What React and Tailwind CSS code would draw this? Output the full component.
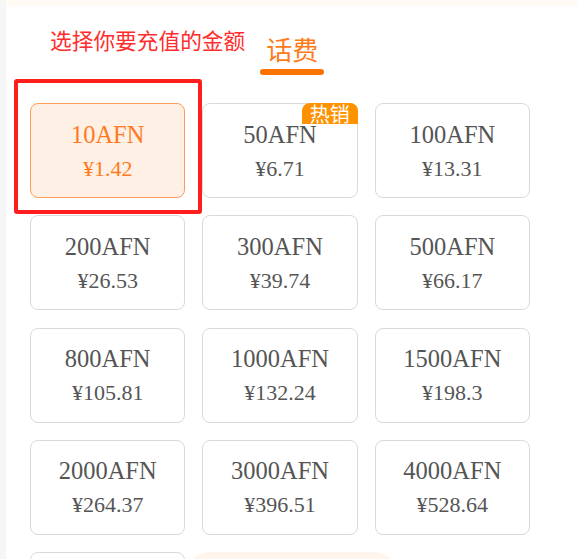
import { useState } from 'react';

const options = [
  { amount: '10AFN', price: '¥1.42' },
  { amount: '50AFN', price: '¥6.71', hot: true },
  { amount: '100AFN', price: '¥13.31' },
  { amount: '200AFN', price: '¥26.53' },
  { amount: '300AFN', price: '¥39.74' },
  { amount: '500AFN', price: '¥66.17' },
  { amount: '800AFN', price: '¥105.81' },
  { amount: '1000AFN', price: '¥132.24' },
  { amount: '1500AFN', price: '¥198.3' },
  { amount: '2000AFN', price: '¥264.37' },
  { amount: '3000AFN', price: '¥396.51' },
  { amount: '4000AFN', price: '¥528.64' },
];

export default function App() {
  const [selected, setSelected] = useState(0);

  return (
    <div className="relative h-[559px] overflow-hidden bg-[#f6f6f6] font-['Noto_Sans_CJK_SC',sans-serif]">
      <div className="ml-[6px] h-full bg-white">
        {/* top tint strip */}
        <div className="h-[6px] bg-[#fffaf4]" />

        {/* Header */}
        <div className="flex items-start pl-[44px] pt-[20px]">
          <span className="text-[21.7px] leading-[28px] text-[#ff2d2d]">选择你要充值的金额</span>
          <div className="ml-[15px] flex flex-col items-center pt-[6px]">
            <span className="px-[6px] text-[26px] leading-[34px] text-[#ff7a1a]">话费</span>
            <div className="mt-[3px] h-[6px] w-[64px] rounded-full bg-[#ff7300]" />
          </div>
        </div>

        {/* Amount grid */}
        <div className="mt-[28px] ml-[24px] grid w-[500px] grid-cols-3 gap-x-[17px] gap-y-[17.3px]">
          {options.map((opt, i) => {
            const active = i === selected;
            return (
              <button
                key={opt.amount}
                onClick={() => setSelected(i)}
                className={
                  'relative flex h-[95px] flex-col items-center justify-center rounded-[8px] border pt-[2px] font-["Liberation_Serif",serif] ' +
                  (active
                    ? 'border-[#ff9c5a] bg-[#fff0e5] text-[#ff7a20]'
                    : 'border-[#d9d9d9] bg-white text-[#555555]')
                }
              >
                <span className="text-[24.5px] leading-[34px]">{opt.amount}</span>
                <span className="text-[22px] leading-[34px]">{opt.price}</span>
                {opt.hot && (
                  <span className="absolute -top-px -right-px flex h-[21px] w-[56px] items-center justify-center rounded-tl-[8px] rounded-tr-[8px] bg-[#ff9200] font-['Noto_Sans_CJK_SC',sans-serif] text-[20px] leading-[21px] text-white">
                    热销
                  </span>
                )}
              </button>
            );
          })}
          {/* next row, only its top edge shows */}
          <div className="h-[95px] rounded-[8px] border border-[#d9d9d9] bg-white" />
        </div>
      </div>

      <div className="pointer-events-none absolute left-[14px] top-[79px] h-[135px] w-[188px] rounded-[3px] border-[4px] border-[#ff1e1e]" />

      {/* bottom floating button edge */}
      <div className="absolute left-[187px] top-[552px] h-[40px] w-[210px] rounded-t-[22px] bg-[#fff5ec]" />
    </div>
  );
}
